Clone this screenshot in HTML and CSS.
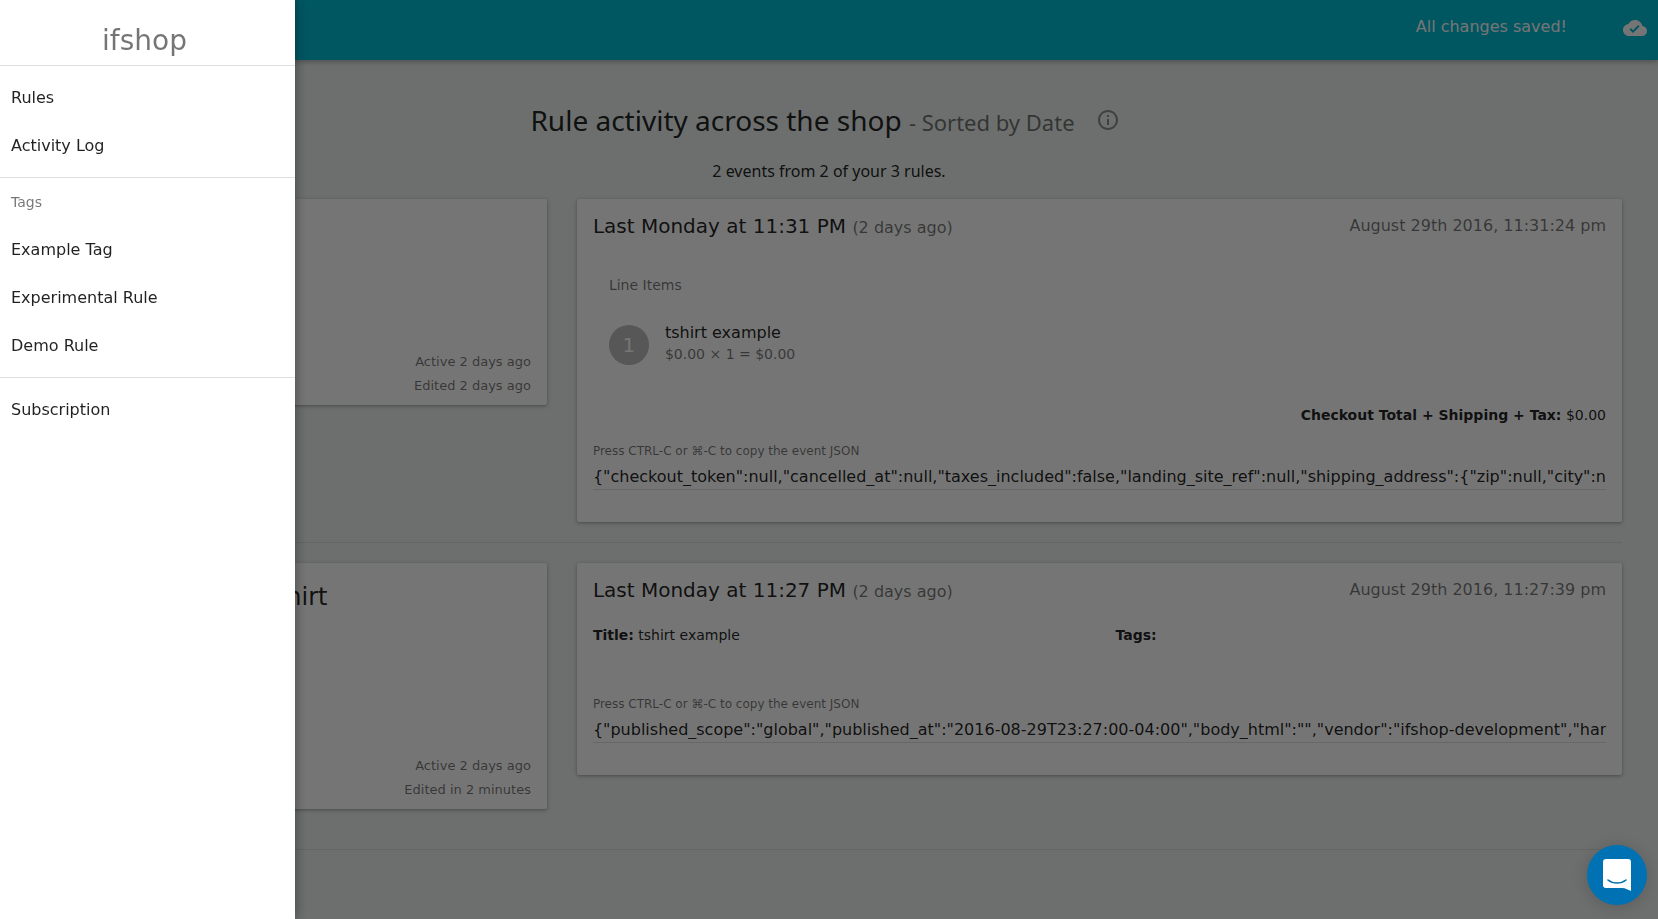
FILE: index.html
```html
<!DOCTYPE html>
<html lang="en">
<head>
  <meta charset="utf-8">
  <meta name="viewport" content="width=device-width, initial-scale=1">
  <title>ifshop - Activity Log</title>
  <link rel="stylesheet" href="styles.css">
</head>
<body>
  <header class="toolbar">
    <span class="toolbar-status">All changes saved!</span>
    <svg class="icon" viewBox="0 0 24 24" aria-hidden="true"><path d="M19.35 10.04C18.67 6.59 15.64 4 12 4 9.11 4 6.6 5.64 5.35 8.04 2.34 8.36 0 10.91 0 14c0 3.31 2.69 6 6 6h13c2.76 0 5-2.24 5-5 0-2.64-2.05-4.78-4.65-4.96zM10 17l-3.5-3.500 1.410-1.410L10 14.170 15.180 9l1.410 1.410L10 17z"/></svg>
  </header>

  <main class="content">
    <div class="page-head">
      <h1 class="page-title">Rule activity across the shop <small class="page-sort">- Sorted by Date</small></h1>
      <button class="info-button" type="button" aria-label="About this page">
        <svg class="icon" viewBox="0 0 24 24" aria-hidden="true"><path d="M11 17h2v-6h-2v6zm1-15C6.480 2 2 6.480 2 12s4.480 10 10 10 10-4.480 10-10S17.520 2 12 2zm0 18c-4.410 0-8-3.590-8-8s3.590-8 8-8 8 3.590 8 8-3.590 8-8 8zM11 9h2V7h-2v2z"/></svg>
      </button>
    </div>
    <p class="page-summary">2 events from 2 of your 3 rules.</p>

    <section class="activity">
      <article class="card rule-card">
        <p class="rule-meta">Active 2 days ago<br>Edited 2 days ago</p>
      </article>
      <article class="card event-card">
        <div class="event-head">
          <h2 class="event-title">Last Monday at 11:31 PM <small class="event-ago">(2 days ago)</small></h2>
          <time class="event-date" datetime="2016-08-29T23:31:24">August 29th 2016, 11:31:24 pm</time>
        </div>
        <div class="line-items">
          <h3 class="list-label">Line Items</h3>
          <div class="line-item">
            <span class="line-count">1</span>
            <div class="line-text">
              <div class="line-name">tshirt example</div>
              <div class="line-price">$0.00 × 1 = $0.00</div>
            </div>
          </div>
        </div>
        <p class="event-total"><strong>Checkout Total + Shipping + Tax:</strong> $0.00</p>
        <label class="json-label" for="json-checkout">Press CTRL-C or ⌘-C to copy the event JSON</label>
        <input class="json-input" id="json-checkout" type="text" readonly value='{"checkout_token":null,"cancelled_at":null,"taxes_included":false,"landing_site_ref":null,"shipping_address":{"zip":null,"city":null}}'>
      </article>
    </section>

    <section class="activity">
      <article class="card rule-card rule-card-tall">
        <h2 class="rule-title">Where title has a tshirt</h2>
        <p class="rule-meta">Active 2 days ago<br>Edited in 2 minutes</p>
      </article>
      <article class="card event-card">
        <div class="event-head">
          <h2 class="event-title">Last Monday at 11:27 PM <small class="event-ago">(2 days ago)</small></h2>
          <time class="event-date" datetime="2016-08-29T23:27:39">August 29th 2016, 11:27:39 pm</time>
        </div>
        <div class="event-fields">
          <p><strong>Title:</strong> tshirt example</p>
          <p><strong>Tags:</strong></p>
        </div>
        <label class="json-label" for="json-product">Press CTRL-C or ⌘-C to copy the event JSON</label>
        <input class="json-input" id="json-product" type="text" readonly value='{"published_scope":"global","published_at":"2016-08-29T23:27:00-04:00","body_html":"","vendor":"ifshop-development","handle":"tshirt-example"}'>
      </article>
    </section>
  </main>

  <div class="backdrop"></div>

  <aside class="sidebar">
    <div class="brand">ifshop</div>
    <nav class="menu">
      <a class="menu-link" href="#rules">Rules</a>
      <a class="menu-link" href="#activity">Activity Log</a>
    </nav>
    <nav class="menu menu-tags" aria-labelledby="tags-label">
      <h2 class="menu-label" id="tags-label">Tags</h2>
      <a class="menu-link" href="#example-tag">Example Tag</a>
      <a class="menu-link" href="#experimental-rule">Experimental Rule</a>
      <a class="menu-link" href="#demo-rule">Demo Rule</a>
    </nav>
    <nav class="menu">
      <a class="menu-link" href="#subscription">Subscription</a>
    </nav>
  </aside>

  <button class="chat-button" type="button" aria-label="Open chat">
    <svg class="chat-icon" viewBox="0 0 28 32" aria-hidden="true">
      <path fill="#fff" d="M3 0h22a3 3 0 0 1 3 3v29c-3-1-5-3-9-3H3a3 3 0 0 1-3-3V3a3 3 0 0 1 3-3z"/>
      <path fill="none" stroke="#0071b2" stroke-width="1.600" stroke-linecap="round" d="M5 21c5 4 13 4 18 0"/>
    </svg>
  </button>
</body>
</html>
```
FILE: styles.css
```css
* {
  box-sizing: border-box;
}

body {
  margin: 0;
  min-height: 100vh;
  background: #ecf1ee;
  color: rgba(0, 0, 0, 0.87);
  font-family: "DejaVu Sans", sans-serif;
  font-size: 16px;
}

h1, h2, h3, p {
  margin: 0;
  font-weight: 400;
}

small {
  line-height: 1;
}

button {
  padding: 0;
  border: 0;
  background: none;
  color: inherit;
  cursor: pointer;
}

.icon {
  display: block;
  width: 24px;
  height: 24px;
  fill: currentColor;
}

/* Toolbar */

.toolbar {
  position: relative;
  display: flex;
  align-items: center;
  justify-content: flex-end;
  gap: 56px;
  height: 60px;
  padding: 0 11px 4px;
  background: #00bcd4;
  color: #fff;
  box-shadow: 0 2px 5px rgba(0, 0, 0, 0.26);
}

.toolbar-status {
  line-height: 24px;
  padding-bottom: 2px;
}

/* Page */

.content {
  padding: 39px 36px 0;
}

.page-head {
  display: flex;
  align-items: center;
  justify-content: center;
  gap: 13px;
}

.page-title {
  font-family: "Noto Sans", sans-serif;
  font-size: 28px;
  line-height: 42px;
}

.page-sort {
  font-size: 22px;
  color: rgba(0, 0, 0, 0.54);
}

.info-button {
  display: grid;
  place-items: center;
  width: 40px;
  height: 40px;
  color: rgba(0, 0, 0, 0.42);
}

.page-summary {
  margin: 18px 0 16px;
  font-family: "Noto Sans", sans-serif;
  line-height: 24px;
  text-align: center;
}

.activity {
  display: grid;
  grid-template-columns: minmax(0, 22fr) minmax(0, 45fr);
  align-items: start;
  gap: 30px;
  margin-bottom: 20px;
  padding-bottom: 20px;
  border-bottom: 1px solid rgba(0, 0, 0, 0.08);
}

.card {
  border-radius: 2px;
  background: #fff;
  box-shadow: 0 1px 4px rgba(0, 0, 0, 0.26), 0 1px 2px rgba(0, 0, 0, 0.1);
}

.rule-card {
  display: flex;
  flex-direction: column;
  justify-content: space-between;
  min-height: 206px;
  margin-bottom: 20px;
  padding: 16px 16px 7px;
}

.rule-card-tall {
  min-height: 246px;
}

.rule-title {
  font-size: 24px;
  line-height: 36px;
}

.rule-meta {
  margin-top: auto;
  font-size: 13px;
  line-height: 24px;
  text-align: right;
  color: rgba(0, 0, 0, 0.54);
}

.event-card {
  padding: 16px 16px 32px;
}

.event-head {
  display: flex;
  justify-content: space-between;
  margin-bottom: 24px;
  line-height: 22px;
}

.event-title {
  font-size: 20px;
}

.event-ago {
  font-size: 16px;
  color: rgba(0, 0, 0, 0.54);
}

.event-date {
  color: rgba(0, 0, 0, 0.54);
}

.line-items {
  padding: 0 16px;
}

.list-label {
  font-size: 14px;
  line-height: 48px;
  color: rgba(0, 0, 0, 0.54);
}

.line-item {
  display: flex;
  align-items: center;
  gap: 16px;
  height: 72px;
}

.line-count {
  display: grid;
  place-items: center;
  width: 40px;
  height: 40px;
  border-radius: 50%;
  background: #bdbdbd;
  color: #fff;
  font-size: 20px;
}

.line-text {
  padding-bottom: 4px;
}

.line-name {
  line-height: 22px;
}

.line-price {
  font-size: 14px;
  line-height: 20px;
  color: rgba(0, 0, 0, 0.54);
}

.event-total {
  margin: 24px 0 19px;
  font-size: 14px;
  line-height: 20px;
  text-align: right;
}

.event-fields {
  display: grid;
  grid-template-columns: 1fr 1fr;
  gap: 32px;
  margin-bottom: 52px;
  font-size: 14px;
  line-height: 20px;
}

.json-label {
  display: block;
  margin-bottom: 2px;
  font-size: 12px;
  line-height: 14px;
  color: rgba(0, 0, 0, 0.54);
}

.json-input {
  display: block;
  width: 100%;
  height: 30px;
  padding: 4px 0 0;
  border: 0;
  border-bottom: 1px solid rgba(0, 0, 0, 0.12);
  background: none;
  color: inherit;
  font: inherit;
}

/* Side navigation */

.backdrop {
  position: fixed;
  inset: 0;
  background: rgba(0, 0, 0, 0.54);
}

.sidebar {
  position: fixed;
  top: 0;
  bottom: 0;
  left: 0;
  width: 295px;
  background: #fff;
  box-shadow: 0 0 12px rgba(0, 0, 0, 0.4);
}

.brand {
  padding: 17px 6px 0 0;
  font-size: 28px;
  line-height: 48px;
  text-align: center;
  color: rgba(0, 0, 0, 0.54);
}

.menu {
  padding: 8px 0 7px;
  border-top: 1px solid #dfdfdf;
}

.menu-tags {
  padding-top: 0;
}

.menu-label,
.menu-link {
  display: block;
  padding: 0 11px;
  line-height: 48px;
}

.menu-label {
  font-size: 14px;
  color: rgba(0, 0, 0, 0.54);
}

.menu-link {
  color: rgba(0, 0, 0, 0.87);
  text-decoration: none;
}

/* Chat launcher */

.chat-button {
  position: fixed;
  right: 11px;
  bottom: 14px;
  display: grid;
  place-items: center;
  width: 60px;
  height: 60px;
  border-radius: 50%;
  background: #0071b2;
  box-shadow: 0 2px 16px rgba(0, 0, 0, 0.16);
}

.chat-icon {
  width: 28px;
  height: 32px;
}
```
